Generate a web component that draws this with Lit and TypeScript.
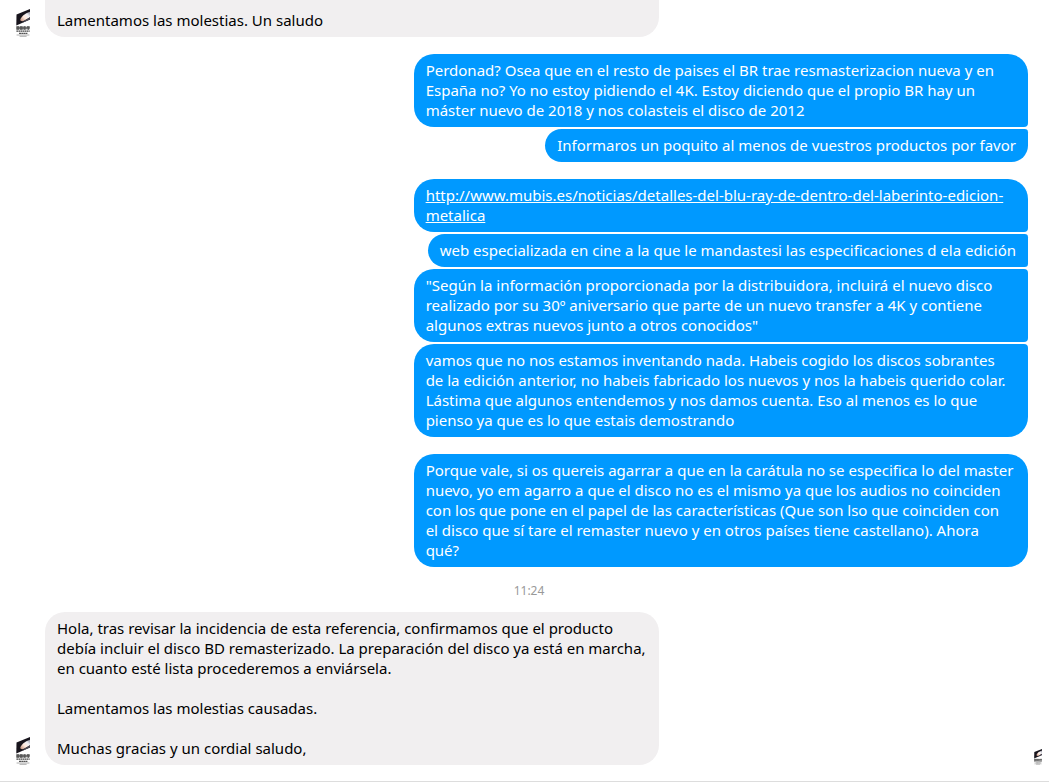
import { LitElement, html, css, svg } from "lit";
import { customElement, property } from "lit/decorators.js";
import { classMap } from "lit/directives/class-map.js";

interface Message {
  text: string;
  link?: boolean;
}

@customElement("page-logo")
class PageLogo extends LitElement {
  static styles = css`
    :host {
      display: block;
    }
    .logo {
      display: block;
      width: 100%;
      height: auto;
    }
  `;

  render() {
    return html`<svg class="logo" viewBox="0 0 14 28" role="img" aria-label="Sony Pictures">
      <defs>
        <linearGradient id="flare" x1="0" y1="1" x2="1" y2="0">
          <stop offset="0" stop-color="#b98674" />
          <stop offset="0.4" stop-color="#ffe9dc" />
          <stop offset="0.7" stop-color="#f1f1f6" />
          <stop offset="1" stop-color="#8d8d9a" />
        </linearGradient>
      </defs>
      ${svg`
        <path d="M0.5 5.4 L14 0 V10.6 L0.3 16.5 Z" fill="#17141c" />
        <path d="M4.4 10.2 C6 7 8.4 4.8 14 2.8 V8.2 L8.4 11.6 C6 12.8 3.8 12 4.4 10.2 Z" fill="url(#flare)" />
        <path d="M9 11.2 L14 8.2 V10.6 L6.4 13.8 Z" fill="#4d4a55" />
        <path d="M0.3 19H13.8" stroke="#777" stroke-width="2.6" />
        <path d="M0.4 17.9H3.2M4 17.9H6.6M7.6 17.9H9.6M11 17.9H13.6M0.4 20.1H3.2M4 20.1H6.6M7.6 20.1H9.6M11.6 20.1H13" stroke="#222" stroke-width="0.9" />
        <path d="M0.4 22.2H13.7" stroke="#444" stroke-width="1.2" stroke-dasharray="1.6 0.4" />
        <path d="M3 24.4H11.4" stroke="#555" stroke-width="1.1" stroke-dasharray="2 0.3" />
        <path d="M0.6 26H13.4M3.6 27.3H10.6" stroke="#999" stroke-width="0.8" />
      `}
    </svg>`;
  }
}

@customElement("message-group")
class MessageGroup extends LitElement {
  @property({ type: Boolean }) own = false;
  @property({ attribute: false }) messages: Message[] = [];

  static styles = css`
    :host {
      display: block;
    }
    .group {
      display: flex;
      flex-direction: column;
      align-items: flex-start;
      gap: 2px;
    }
    .group.own {
      align-items: flex-end;
    }
    .bubble {
      box-sizing: border-box;
      max-width: 62.5%;
      padding: 6px 12px 7px;
      border-radius: 20px;
      background: #f1eff0;
      color: #000;
      font-size: 15px;
      line-height: 20px;
      white-space: pre-line;
      overflow-wrap: break-word;
    }
    .own .bubble {
      border-radius: 20px 4px 4px 20px;
      background: #0099ff;
      color: #fff;
    }
    .own .bubble:first-child {
      border-top-right-radius: 20px;
    }
    .own .bubble:last-child {
      border-bottom-right-radius: 20px;
    }
    .link {
      color: inherit;
    }
  `;

  render() {
    return html`<div class=${classMap({ group: true, own: this.own })}>
      ${this.messages.map(
        (m) => html`<div class="bubble">${m.link ? html`<a class="link" href=${m.text}>${m.text}</a>` : m.text}</div>`
      )}
    </div>`;
  }
}

const complaint: Message[] = [
  {
    text: "Perdonad? Osea que en el resto de paises el BR trae resmasterizacion nueva y en España no? Yo no estoy pidiendo el 4K. Estoy diciendo que el propio BR hay un máster nuevo de 2018 y nos colasteis el disco de 2012",
  },
  { text: "Informaros un poquito al menos de vuestros productos por favor" },
];

const evidence: Message[] = [
  { text: "http://www.mubis.es/noticias/detalles-del-blu-ray-de-dentro-del-laberinto-edicion-metalica", link: true },
  { text: "web especializada en cine a la que le mandastesi las especificaciones d ela edición" },
  {
    text: '"Según la información proporcionada por la distribuidora, incluirá el nuevo disco realizado por su 30º aniversario que parte de un nuevo transfer a 4K y contiene algunos extras nuevos junto a otros conocidos"',
  },
  {
    text: "vamos que no nos estamos inventando nada. Habeis cogido los discos sobrantes de la edición anterior, no habeis fabricado los nuevos y nos la habeis querido colar. Lástima que algunos entendemos y nos damos cuenta. Eso al menos es lo que pienso ya que es lo que estais demostrando",
  },
];

const closing: Message[] = [
  {
    text: "Porque vale, si os quereis agarrar a que en la carátula no se especifica lo del master nuevo, yo em agarro a que el disco no es el mismo ya que los audios no coinciden con los que pone en el papel de las características (Que son lso que coinciden con el\u00a0disco que sí tare el remaster nuevo y en otros países tiene castellano). Ahora qué?",
  },
];

const reply: Message[] = [
  {
    text: "Hola, tras revisar la incidencia de esta referencia, confirmamos que el producto debía incluir el disco BD remasterizado. La preparación del disco ya está en marcha, en cuanto esté lista procederemos a enviársela.\n\nLamentamos las molestias causadas.\n\nMuchas gracias y un cordial saludo,",
  },
];

@customElement("app-root")
class AppRoot extends LitElement {
  static styles = css`
    :host {
      display: block;
      background: #fff;
      font-family: "Noto Sans", "Segoe UI", sans-serif;
    }
    .thread {
      padding: 0 7px 16px 16px;
      border-bottom: 1px solid #dddddd;
    }
    .row {
      display: grid;
      grid-template-columns: 29px 1fr 14px;
      align-items: end;
      margin-bottom: 17px;
    }
    .row.flush {
      margin-bottom: 0;
    }
    .body {
      grid-column: 2;
    }
    .tail {
      box-sizing: border-box;
      width: 62.5%;
      padding: 10px 12px 7px;
      border-radius: 0 0 20px 20px;
      background: #f1eff0;
      color: #000;
      font-size: 15px;
      line-height: 20px;
    }
    .avatar {
      width: 14px;
    }
    .seen {
      width: 8px;
      justify-self: end;
    }
    .time {
      padding: 15px 0 13px;
      color: #999;
      font-size: 12px;
      line-height: 17px;
      text-align: center;
    }
  `;

  render() {
    return html`<main class="thread">
      <div class="row">
        <page-logo class="avatar"></page-logo>
        <div class="body"><div class="tail">Lamentamos las molestias. Un saludo</div></div>
      </div>
      <div class="row"><message-group class="body" own .messages=${complaint}></message-group></div>
      <div class="row"><message-group class="body" own .messages=${evidence}></message-group></div>
      <div class="row flush"><message-group class="body" own .messages=${closing}></message-group></div>
      <div class="time">11:24</div>
      <div class="row flush">
        <page-logo class="avatar"></page-logo>
        <message-group class="body" .messages=${reply}></message-group>
        <page-logo class="seen"></page-logo>
      </div>
    </main>`;
  }
}
